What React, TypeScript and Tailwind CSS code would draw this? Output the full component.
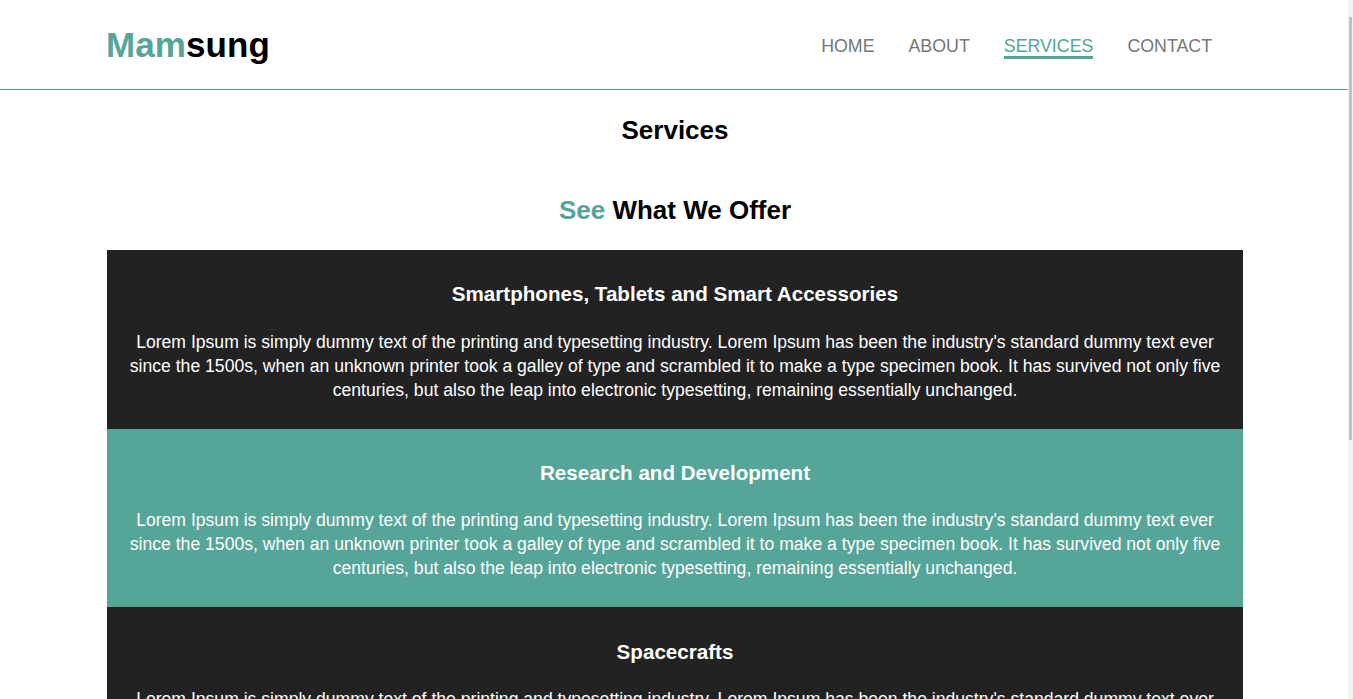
const lorem =
  "Lorem Ipsum is simply dummy text of the printing and typesetting industry. Lorem Ipsum has been the industry's standard dummy text ever since the 1500s, when an unknown printer took a galley of type and scrambled it to make a type specimen book. It has survived not only five centuries, but also the leap into electronic typesetting, remaining essentially unchanged.";

const services = [
  { title: "Smartphones, Tablets and Smart Accessories", bg: "bg-[#222222]" },
  { title: "Research and Development", bg: "bg-[#55a598]" },
  { title: "Spacecrafts", bg: "bg-[#222222]" },
];

const links = ["HOME", "ABOUT", "SERVICES", "CONTACT"];

function Header() {
  return (
    <header className="h-[90px] border-b border-[#5f9f96]">
      <div className="ml-[106px] flex h-[89px] w-[1136px] items-center justify-between">
        <h1 className="text-[35px] font-bold leading-none tracking-[0.1px]">
          <span className="text-[#55a598]">Mam</span>
          <span className="text-black">sung</span>
        </h1>
        <nav className="mr-[30px] flex gap-[34px] pt-[4px] text-[17.8px] leading-none">
          {links.map((l) => (
            <a
              key={l}
              className={
                l === "SERVICES"
                  ? "relative text-[#55a598] after:absolute after:left-0 after:right-0 after:top-[18px] after:h-[3px] after:bg-[#55a598]"
                  : "text-[#777777]"
              }
            >
              {l}
            </a>
          ))}
        </nav>
      </div>
    </header>
  );
}

export default function App() {
  return (
    <div
      className="flex h-[699px] overflow-hidden bg-white"
      style={{ fontFamily: '"Liberation Sans", Arial, sans-serif' }}
    >
      <div className="w-[1348px] shrink-0">
        <Header />
        <main className="ml-[107px] w-[1136px]">
          <h2 className="mt-[25px] text-center text-[26px] font-bold leading-[30px] text-black">Services</h2>
          <h2 className="mt-[50px] text-center text-[26px] font-bold leading-[30px] text-black">
            <span className="text-[#55a598]">See</span> What We Offer
          </h2>
          <div className="mt-[25px]">
            {services.map((s, i) => (
              <section
                key={s.title}
                className={`${s.bg} px-5 pb-[27px] text-center text-white ${i === 2 ? "pt-[33px]" : "pt-[32px]"}`}
              >
                <h3 className="text-[20.6px] font-bold leading-[23px]">{s.title}</h3>
                <p className={`${i === 0 ? "mt-[25px]" : "mt-[24px]"} text-[17.6px] leading-[24px]`}>{lorem}</p>
              </section>
            ))}
          </div>
        </main>
      </div>
      <div className="relative w-[5px] shrink-0 bg-[#f1f1f1]">
        <div className="absolute left-[1px] top-[17px] h-[423px] w-[3px] bg-[#c1c1c1]" />
      </div>
    </div>
  );
}
